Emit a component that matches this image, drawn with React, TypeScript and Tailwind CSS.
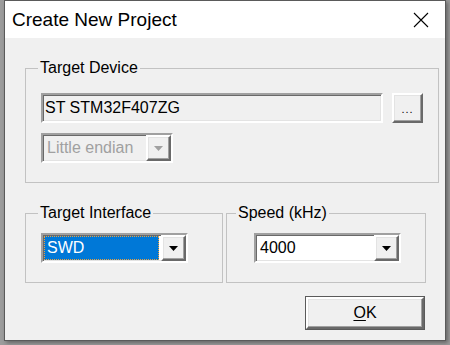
import React from 'react';

const sunken =
  'border-2 border-t-[#a0a0a0] border-l-[#a0a0a0] border-b-white border-r-white shadow-[inset_1px_1px_0_#696969,inset_-1px_-1px_0_#e3e3e3]';
const raised =
  'border-2 border-t-white border-l-white border-b-[#696969] border-r-[#696969] shadow-[inset_-1px_-1px_0_#a0a0a0,inset_1px_1px_0_#e3e3e3]';

const Arrow: React.FC<{ disabled?: boolean }> = ({ disabled }) => (
  <svg width="9" height="5" viewBox="0 0 9 5">
    <path d="M0 0h9L4.5 5z" fill={disabled ? '#a0a0a0' : '#000'} />
  </svg>
);

interface ComboProps {
  value: string;
  width: string;
  disabled?: boolean;
  focused?: boolean;
}

const Combo: React.FC<ComboProps> = ({ value, width, disabled, focused }) => (
  <div className={`${width} h-[30px] flex ${sunken} ${disabled ? 'bg-[#f0f0f0]' : 'bg-white'}`}>
    <div className="flex-1 flex p-[1px] pr-[2px]">
      {focused ? (
        <div className="flex-1 flex items-center bg-[#0078d7] border border-dotted border-[#e8a040] pl-[2px] text-white">
          {value}
        </div>
      ) : (
        <div className={`flex-1 flex items-center pl-[3px] ${disabled ? 'text-[#a0a0a0]' : 'text-black'}`}>
          {value}
        </div>
      )}
    </div>
    <div className={`w-[25px] bg-[#f0f0f0] flex items-center justify-center ${raised}`}>
      <Arrow disabled={disabled} />
    </div>
  </div>
);

const App: React.FC = () => {
  return (
    <div className="w-[450px] h-[345px] bg-[#9c9c9c] pl-[4px] overflow-hidden font-['Liberation_Sans',Arial,sans-serif] text-[16px] text-black">
      <div className="w-[442px] h-[341px] bg-[#f0f0f0] border border-[#5a5a5a] flex flex-col shadow-[2px_2px_4px_rgba(0,0,0,0.35)]">
        {/* title bar */}
        <div className="h-[37px] bg-white flex items-center justify-between pl-[7px] pr-[16px] shrink-0">
          <span className="text-[19px] leading-none">Create New Project</span>
          <svg width="16" height="16" viewBox="0 0 16 16">
            <path d="M1 1l14 14M15 1L1 15" stroke="#000" strokeWidth="1.1" />
          </svg>
        </div>

        {/* body */}
        <div className="flex-1 flex flex-col pl-[20px] pt-[21px]">
          <fieldset className="w-[403px] border border-[#c2c2c2] px-[15px] pt-[16px] pb-[19px]">
            <legend className="ml-[-3px] px-[2px] leading-[18px]">Target Device</legend>
            <div className="flex items-center gap-[9px]">
              <div className={`w-[342px] h-[30px] bg-[#f0f0f0] flex items-center pl-[2px] ${sunken}`}>
                ST STM32F407ZG
              </div>
              <button className={`w-[31px] h-[30px] bg-[#f0f0f0] flex items-end justify-center pb-[6px] text-[11px] leading-none tracking-[1px] ${raised}`}>
                ...
              </button>
            </div>
            <div className="mt-[10px]">
              <Combo value="Little endian" width="w-[132px]" disabled />
            </div>
          </fieldset>

          <div className="flex gap-[3px] mt-[21px]">
            <fieldset className="w-[198px] border border-[#c2c2c2] pl-[15px] pt-[11px] pb-[19px]">
              <legend className="ml-[-3px] px-[2px] leading-[18px]">Target Interface</legend>
              <Combo value="SWD" width="w-[147px]" focused />
            </fieldset>
            <fieldset className="w-[200px] border border-[#c2c2c2] pl-[27px] pt-[11px] pb-[19px]">
              <legend className="ml-[-18px] px-[2px] leading-[18px]">Speed (kHz)</legend>
              <Combo value="4000" width="w-[147px]" />
            </fieldset>
          </div>

          <div className="w-[400px] flex justify-end mt-[13px]">
            <button className="w-[120px] h-[34px] border border-[#5a5a5a] bg-[#f0f0f0] p-0">
              <div className={`w-full h-full flex items-center justify-center ${raised}`}>
                <span>
                  <span className="underline underline-offset-2">O</span>K
                </span>
              </div>
            </button>
          </div>
        </div>
      </div>
    </div>
  );
};

export default App;
